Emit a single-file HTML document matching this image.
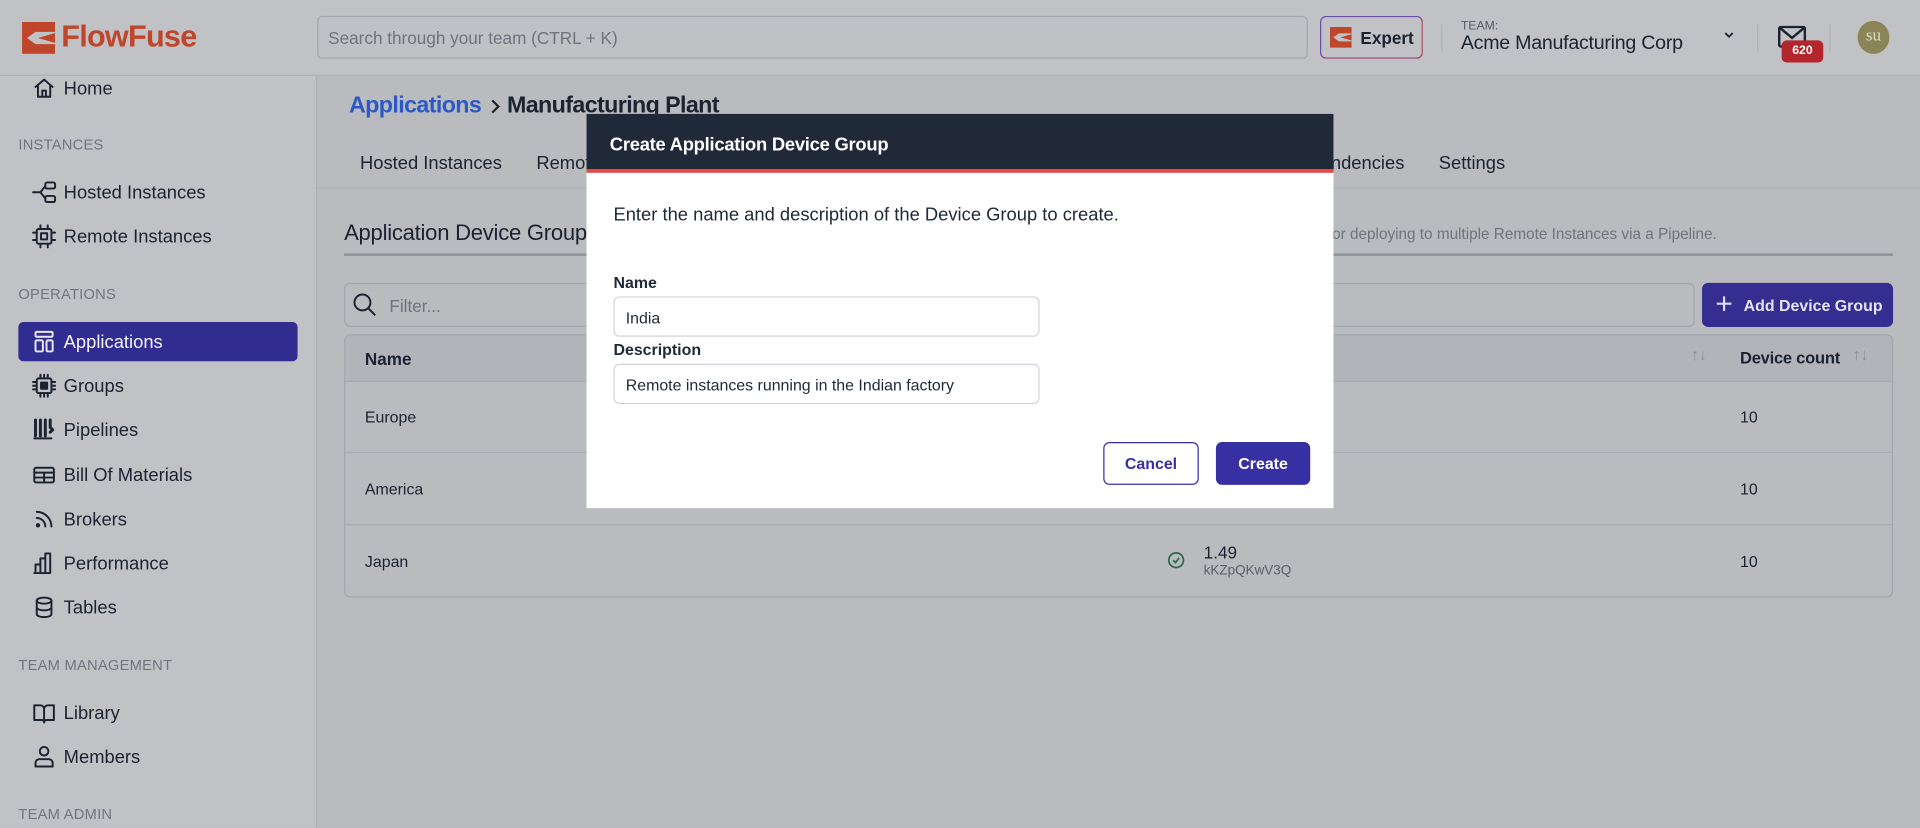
<!DOCTYPE html>
<html><head><meta charset="utf-8"><style>
*{box-sizing:border-box;margin:0;padding:0}
html,body{width:1920px;height:827px;overflow:hidden;background:#b9bbbf;font-family:"Liberation Sans",sans-serif}
#w{position:absolute;left:0;top:0;width:1568px;height:676px;transform:scale(1.22449);transform-origin:0 0;background:#b9bbbf}
.a{position:absolute;white-space:nowrap}
.hdr{left:0;top:0;width:1568px;height:62px;background:#c0c2c6;border-bottom:1px solid #aeb0b5}
.side{left:0;top:62px;width:259px;height:614px;background:#c0c2c6;border-right:1px solid #aeb0b5}
.ni{font-size:15px;color:#1c2230}
.sl{font-size:12px;color:#707580;letter-spacing:.2px}
.ic{position:absolute;width:20px;height:20px;fill:none;stroke:#1c2230;stroke-width:1.6;stroke-linecap:round;stroke-linejoin:round}
.tab{font-size:15px;color:#1c2230;top:125px}
.row{position:absolute;left:282px;width:1264px;border-top:1px solid #a8abb1}
.cell{font-size:13px;color:#1c2230}
</style></head><body><div id="w">
<div class="a hdr"></div>
<svg class="a" style="left:18px;top:18px" width="27" height="26" viewBox="0 0 27 26"><path d="M0 0h27v8H11L4 13l7 5h16v8H0z" fill="#c0462b"/><path d="M13 13l14-4v8z" fill="#c0462b"/></svg>
<div class="a" style="left:50px;top:16px;font-size:25px;font-weight:bold;color:#c0462b;letter-spacing:-.6px">FlowFuse</div>
<div class="a" style="left:259px;top:13px;width:809px;height:35px;border:1px solid #a3a6ac;border-radius:4px;background:#bfc1c5"></div>
<div class="a" style="left:268px;top:23px;font-size:14px;color:#6f737c">Search through your team (CTRL + K)</div>
<div class="a" style="left:1078px;top:13px;width:84px;height:35px;border:1px solid #6a4fa6;border-radius:5px;border-right-color:#b0405a;border-bottom-color:#9a4070"></div>
<svg class="a" style="left:1086px;top:22px" width="18" height="17" viewBox="0 0 27 26"><path d="M0 0h27v8H11L4 13l7 5h16v8H0z" fill="#c0462b"/><path d="M13 13l14-4v8z" fill="#c0462b"/></svg>
<div class="a" style="left:1111px;top:23px;font-size:14px;font-weight:bold;color:#1c2230">Expert</div>
<div class="a" style="left:1177px;top:20px;width:1px;height:22px;background:#aeb0b5"></div>
<div class="a" style="left:1193px;top:16px;font-size:10px;color:#555a63">TEAM:</div>
<div class="a" style="left:1193px;top:27px;font-size:16px;color:#1c2230;letter-spacing:-.2px">Acme Manufacturing Corp</div>
<svg class="a" style="left:1407px;top:25px" width="10" height="8"><path d="M2 2l3 3 3-3" stroke="#1c2230" stroke-width="1.5" fill="none"/></svg>
<div class="a" style="left:1435px;top:20px;width:1px;height:22px;background:#aeb0b5"></div>
<svg class="a" style="left:1452px;top:21px" width="23" height="20"><rect x="1" y="1" width="21" height="16" rx="1.5" fill="none" stroke="#1c2230" stroke-width="2"/><path d="M2 2l9.5 8L21 2" fill="none" stroke="#1c2230" stroke-width="2"/></svg>
<div class="a" style="left:1455px;top:33px;width:34px;height:18px;background:#b3262e;border-radius:4px;color:#fff;font-size:10px;font-weight:bold;text-align:center;line-height:18px">620</div>
<div class="a" style="left:1494px;top:20px;width:1px;height:22px;background:#aeb0b5"></div>
<div class="a" style="left:1517px;top:17px;width:26px;height:27px;border-radius:50%;background:#8a8456;color:#dcdac8;font-family:'Liberation Serif',serif;font-size:14px;text-align:center;line-height:26px">su</div>

<div class="a side"></div>
<svg class="ic" style="left:26px;top:62px" viewBox="0 0 20 20"><path d="M3 9l7-6 7 6M5 8v9h10V8M8.5 17v-5h3v5"/></svg>
<div class="a ni" style="left:52px;top:64px">Home</div>
<div class="a sl" style="left:15px;top:111px">INSTANCES</div>
<svg class="ic" style="left:26px;top:147px" viewBox="0 0 20 20"><path d="M1 10h6M7 10l4-5M7 10l4 5"/><rect x="11" y="2" width="8" height="5" rx="1.5"/><rect x="11" y="13" width="8" height="5" rx="1.5"/></svg>
<div class="a ni" style="left:52px;top:149px">Hosted Instances</div>
<svg class="ic" style="left:26px;top:183px" viewBox="0 0 20 20"><rect x="4" y="4" width="12" height="12" rx="1.5"/><rect x="7.5" y="7.5" width="5" height="5"/><path d="M7 1v3M13 1v3M7 16v3M13 16v3M1 7h3M1 13h3M16 7h3M16 13h3"/></svg>
<div class="a ni" style="left:52px;top:185px">Remote Instances</div>
<div class="a sl" style="left:15px;top:233px">OPERATIONS</div>
<div class="a" style="left:15px;top:263px;width:228px;height:32px;background:#312c8f;border-radius:4px"></div>
<svg class="ic" style="left:26px;top:269px;stroke:#e8e8f5" viewBox="0 0 20 20"><rect x="3" y="2" width="14" height="4" rx="1"/><rect x="3" y="9" width="6" height="9" rx="1"/><rect x="12" y="9" width="5" height="9" rx="1"/></svg>
<div class="a ni" style="left:52px;top:271px;color:#f2f2fa">Applications</div>
<svg class="ic" style="left:26px;top:305px" viewBox="0 0 20 20"><rect x="4" y="4" width="12" height="12" rx="1.5"/><rect x="7.5" y="7.5" width="5" height="5" fill="#1c2230"/><path d="M7 1v3M10 1v3M13 1v3M7 16v3M10 16v3M13 16v3M1 7h3M1 10h3M1 13h3M16 7h3M16 10h3M16 13h3"/></svg>
<div class="a ni" style="left:52px;top:307px">Groups</div>
<svg class="ic" style="left:26px;top:341px" viewBox="0 0 20 20"><path d="M3 2v13M7 2v13M11 2v13M15 2v6l2 2-2 2" stroke-width="2.4"/><path d="M2 17h14"/></svg>
<div class="a ni" style="left:52px;top:343px">Pipelines</div>
<svg class="ic" style="left:26px;top:378px" viewBox="0 0 20 20"><rect x="2" y="4" width="16" height="12" rx="1.5"/><path d="M2 8h16M2 12h16M10 8v8"/></svg>
<div class="a ni" style="left:52px;top:380px">Bill Of Materials</div>
<svg class="ic" style="left:26px;top:414px" viewBox="0 0 20 20"><path d="M4 4a12 12 0 0 1 12 12M4 9a7 7 0 0 1 7 7"/><circle cx="5" cy="15" r="1" fill="#1c2230"/></svg>
<div class="a ni" style="left:52px;top:416px">Brokers</div>
<svg class="ic" style="left:26px;top:450px" viewBox="0 0 20 20"><path d="M3 18V11h4v7M7 18V6h4v12M11 18V2h4v16H2"/></svg>
<div class="a ni" style="left:52px;top:452px">Performance</div>
<svg class="ic" style="left:26px;top:486px" viewBox="0 0 20 20"><ellipse cx="10" cy="4.5" rx="6" ry="2.5"/><path d="M4 4.5v11c0 1.4 2.7 2.5 6 2.5s6-1.1 6-2.5v-11M4 10c0 1.4 2.7 2.5 6 2.5s6-1.1 6-2.5"/></svg>
<div class="a ni" style="left:52px;top:488px">Tables</div>
<div class="a sl" style="left:15px;top:536px">TEAM MANAGEMENT</div>
<svg class="ic" style="left:26px;top:572px" viewBox="0 0 20 20"><path d="M2 4h5a3 3 0 0 1 3 3v11a2 2 0 0 0-2-2H2zM18 4h-5a3 3 0 0 0-3 3v11a2 2 0 0 1 2-2h6z"/></svg>
<div class="a ni" style="left:52px;top:574px">Library</div>
<svg class="ic" style="left:26px;top:608px" viewBox="0 0 20 20"><circle cx="10" cy="5.5" r="3.5"/><path d="M3 18v-3a3 3 0 0 1 3-3h8a3 3 0 0 1 3 3v3z"/></svg>
<div class="a ni" style="left:52px;top:610px">Members</div>
<div class="a sl" style="left:15px;top:658px">TEAM ADMIN</div>

<div class="a" style="left:285px;top:76px;font-size:19px;font-weight:bold;color:#2b5ac8;letter-spacing:-.5px">Applications</div>
<svg class="a" style="left:398px;top:80px" width="12" height="14"><path d="M4 2l5 5-5 5" stroke="#1c2230" stroke-width="1.8" fill="none"/></svg>
<div class="a" style="left:414px;top:76px;font-size:19px;font-weight:bold;color:#1c2230;letter-spacing:-.5px">Manufacturing Plant</div>
<div class="a tab" style="left:294px">Hosted Instances</div>
<div class="a tab" style="left:438px">Remote Instances</div>
<div class="a tab" style="left:1051px">Dependencies</div>
<div class="a tab" style="left:1175px">Settings</div>
<div class="a" style="left:259px;top:153px;width:1309px;height:1px;background:#aeb0b5"></div>
<div class="a" style="left:281px;top:180px;font-size:18px;color:#1c2230;letter-spacing:-.2px">Application Device Groups</div>
<div class="a" style="right:166px;top:184px;font-size:12.5px;color:#6f737c">Groups allow for deploying to multiple Remote Instances via a Pipeline.</div>
<div class="a" style="left:281px;top:207px;width:1265px;height:2px;background:#8f939a"></div>
<div class="a" style="left:281px;top:231px;width:1103px;height:36px;border:1px solid #a3a6ac;border-radius:5px"></div>
<svg class="a" style="left:288px;top:239px" width="20" height="20"><circle cx="8" cy="8" r="6.5" fill="none" stroke="#1c2230" stroke-width="1.6"/><path d="M13 13l5.5 5.5" stroke="#1c2230" stroke-width="1.6"/></svg>
<div class="a" style="left:318px;top:242px;font-size:14px;color:#6f737c">Filter...</div>
<div class="a" style="left:1390px;top:231px;width:156px;height:36px;background:#332e90;border-radius:5px"></div>
<svg class="a" style="left:1401px;top:241px" width="14" height="14"><path d="M7 1v12M1 7h12" stroke="#dcdcee" stroke-width="1.8"/></svg>
<div class="a" style="left:1424px;top:242px;font-size:13px;font-weight:bold;color:#e4e4f2">Add Device Group</div>
<div class="a" style="left:281px;top:273px;width:1265px;height:215px;border:1px solid #a3a6ac;border-radius:5px"></div>
<div class="a" style="left:282px;top:274px;width:1263px;height:37px;background:#b2b4b9;border-radius:5px 5px 0 0"></div>
<div class="a cell" style="left:298px;top:285px;font-weight:bold;font-size:14px">Name</div>
<div class="a" style="left:1381px;top:282px;font-size:13px;color:#8a8e95">↑↓</div>
<div class="a cell" style="left:1421px;top:285px;font-weight:bold;font-size:13.5px;letter-spacing:-.2px">Device count</div>
<div class="a" style="left:1513px;top:282px;font-size:13px;color:#8a8e95">↑↓</div>
<div class="row" style="top:311px"></div>
<div class="row" style="top:369px"></div>
<div class="row" style="top:428px"></div>
<div class="a cell" style="left:298px;top:333px">Europe</div><div class="a cell" style="left:1421px;top:333px">10</div>
<div class="a cell" style="left:298px;top:392px">America</div><div class="a cell" style="left:1421px;top:392px">10</div>
<div class="a cell" style="left:298px;top:451px">Japan</div><div class="a cell" style="left:1421px;top:451px">10</div>
<svg class="a" style="left:953px;top:450px" width="15" height="15"><circle cx="7.5" cy="7.5" r="6" fill="none" stroke="#2a6b4a" stroke-width="1.4"/><path d="M5 7.5l2 2 3-4" fill="none" stroke="#2a6b4a" stroke-width="1.4"/></svg>
<div class="a cell" style="left:983px;top:443px;font-size:14px">1.49</div>
<div class="a" style="left:983px;top:460px;font-size:11px;color:#5a5f68">kKZpQKwV3Q</div>

<div class="a" style="left:479px;top:93px;width:610px;height:322px;background:#fff"></div>
<div class="a" style="left:479px;top:93px;width:610px;height:48px;background:#1f2937;border-bottom:3px solid #ef4444"></div>
<div class="a" style="left:498px;top:110px;font-size:15px;font-weight:bold;color:#fff;letter-spacing:-.2px">Create Application Device Group</div>
<div class="a" style="left:501px;top:167px;font-size:15px;color:#1f2937">Enter the name and description of the Device Group to create.</div>
<div class="a" style="left:501px;top:223px;font-size:13px;font-weight:bold;color:#1f2937">Name</div>
<div class="a" style="left:501px;top:242px;width:348px;height:33px;border:1px solid #d1d5db;border-radius:5px"></div>
<div class="a" style="left:511px;top:252px;font-size:13px;color:#1f2937">India</div>
<div class="a" style="left:501px;top:278px;font-size:13px;font-weight:bold;color:#1f2937">Description</div>
<div class="a" style="left:501px;top:297px;width:348px;height:33px;border:1px solid #d1d5db;border-radius:5px"></div>
<div class="a" style="left:511px;top:307px;font-size:13px;color:#1f2937">Remote instances running in the Indian factory</div>
<div class="a" style="left:901px;top:361px;width:78px;height:35px;border:1px solid #3730a3;border-radius:5px;text-align:center;line-height:33px;font-size:13px;font-weight:bold;color:#3730a3">Cancel</div>
<div class="a" style="left:993px;top:361px;width:77px;height:35px;background:#3730a3;border-radius:5px;text-align:center;line-height:35px;font-size:13px;font-weight:bold;color:#fff">Create</div>
</div></body></html>
